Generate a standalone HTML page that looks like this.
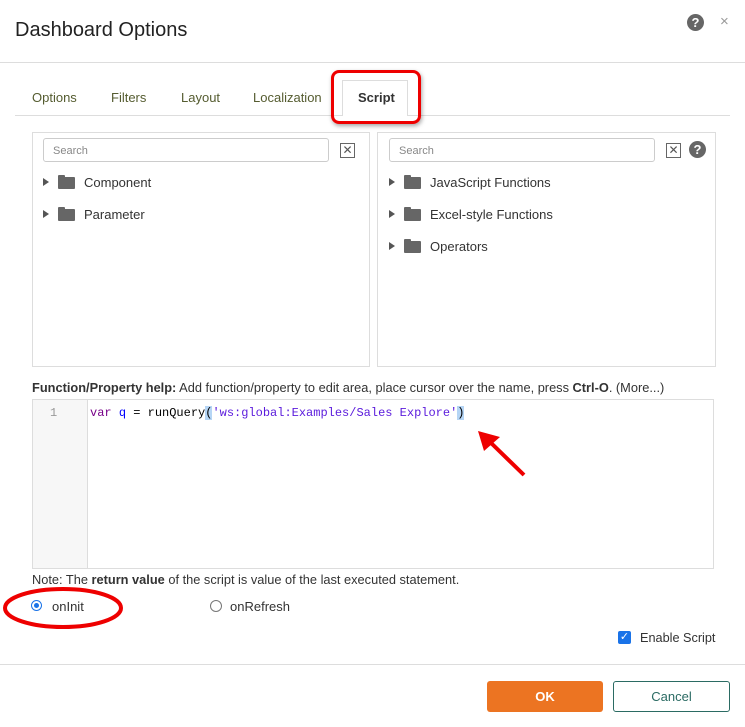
<!DOCTYPE html>
<html><head><style>
body{margin:0;width:745px;height:727px;background:#fff;font-family:"Liberation Sans",sans-serif;position:relative;overflow:hidden;color:#333}
.a{position:absolute}
.title{left:15px;top:19px;font-size:20px;color:#222}
.tab{top:90px;font-size:13px;color:#555c30}
.panel{border:1px solid #ddd;top:132px;height:233px}
.search{border:1px solid #ccc;border-radius:3px;height:24px;top:138px;font-size:11px;color:#888;box-sizing:border-box;padding:6px 9px}
.xb{width:13px;height:13px;border:1px solid #666;top:143px;font-size:12px;line-height:12px;text-align:center;color:#555}
.item{font-size:13px;color:#333}
.tri{width:0;height:0;border-left:6px solid #555;border-top:4px solid transparent;border-bottom:4px solid transparent}
.fold{width:17px;height:12px;background:#666;border-radius:1px}
.fold:before{content:"";position:absolute;left:0;top:-2px;width:7px;height:3px;background:#666;border-radius:1px 1px 0 0}
</style></head><body>
<div class="a title">Dashboard Options</div>
<div class="a" style="left:687px;top:14px;width:17px;height:17px;border-radius:50%;background:#666;color:#fff;font-weight:bold;font-size:13px;text-align:center;line-height:17px">?</div>
<div class="a" style="left:720px;top:13px;font-size:15px;color:#999">×</div>
<div class="a" style="left:0;top:62px;width:745px;height:1px;background:#ddd"></div>

<div class="a tab" style="left:32px">Options</div>
<div class="a tab" style="left:111px">Filters</div>
<div class="a tab" style="left:181px">Layout</div>
<div class="a tab" style="left:253px">Localization</div>
<div class="a" style="left:15px;top:115px;width:715px;height:1px;background:#ddd"></div>
<div class="a" style="left:342px;top:80px;width:66px;height:36px;border:1px solid #ddd;border-bottom:none;background:#fff;box-sizing:border-box"></div>
<div class="a tab" style="left:358px;color:#333;font-weight:bold">Script</div>
<div class="a" style="left:331px;top:70px;width:90px;height:54px;border:3px solid #e00;border-radius:8px;box-sizing:border-box;box-shadow:1px 2px 4px rgba(0,0,0,.35)"></div>

<div class="a panel" style="left:32px;width:336px"></div>
<div class="a panel" style="left:377px;width:337px"></div>
<div class="a search" style="left:43px;width:286px">Search</div>
<div class="a xb" style="left:340px">✕</div>
<div class="a search" style="left:389px;width:266px">Search</div>
<div class="a xb" style="left:666px">✕</div>
<div class="a" style="left:689px;top:141px;width:17px;height:17px;border-radius:50%;background:#666;color:#fff;font-weight:bold;font-size:13px;text-align:center;line-height:17px">?</div>

<div class="a tri" style="left:43px;top:178px"></div><div class="a fold" style="left:58px;top:177px"></div><div class="a item" style="left:84px;top:175px">Component</div>
<div class="a tri" style="left:43px;top:210px"></div><div class="a fold" style="left:58px;top:209px"></div><div class="a item" style="left:84px;top:207px">Parameter</div>
<div class="a tri" style="left:389px;top:178px"></div><div class="a fold" style="left:404px;top:177px"></div><div class="a item" style="left:430px;top:175px">JavaScript Functions</div>
<div class="a tri" style="left:389px;top:210px"></div><div class="a fold" style="left:404px;top:209px"></div><div class="a item" style="left:430px;top:207px">Excel-style Functions</div>
<div class="a tri" style="left:389px;top:242px"></div><div class="a fold" style="left:404px;top:241px"></div><div class="a item" style="left:430px;top:239px">Operators</div>

<div class="a" style="left:32px;top:380px;font-size:12.8px;color:#333;white-space:nowrap"><b>Function/Property help:</b> Add function/property to edit area, place cursor over the name, press <b>Ctrl-O</b>. (More...)</div>
<div class="a" style="left:32px;top:399px;width:682px;height:170px;border:1px solid #ddd;box-sizing:border-box"></div>
<div class="a" style="left:33px;top:400px;width:54px;height:168px;background:#f7f7f7;border-right:1px solid #ddd"></div>
<div class="a" style="left:50px;top:406px;font-family:'Liberation Mono',monospace;font-size:12px;color:#999">1</div>
<div class="a" style="left:90px;top:406px;font-family:'Liberation Mono',monospace;font-size:12px;white-space:pre;color:#000"><span style="color:#708">var</span> <span style="color:#00f">q</span> = runQuery<span style="background:#b5d5f5">(</span><span style="color:#5a1adc">'ws:global:Examples/Sales Explore'</span><span style="background:#b5d5f5">)</span></div>
<svg class="a" style="left:470px;top:425px" width="65" height="60"><line x1="54" y1="50" x2="18" y2="15" stroke="#e00" stroke-width="4"/><polygon points="8,6 30,12 14,26" fill="#e00"/></svg>

<div class="a" style="left:32px;top:572px;font-size:12.8px;color:#333;white-space:nowrap">Note: The <b>return value</b> of the script is value of the last executed statement.</div>
<div class="a" style="left:31px;top:600px;width:11px;height:11px;border-radius:50%;border:1px solid #1a73e8;box-sizing:border-box;background:#fff"><div style="margin:2px;width:5px;height:5px;border-radius:50%;background:#1a73e8"></div></div>
<div class="a" style="left:52px;top:599px;font-size:13px">onInit</div>
<div class="a" style="left:210px;top:600px;width:12px;height:12px;border-radius:50%;border:1px solid #777;box-sizing:border-box"></div>
<div class="a" style="left:230px;top:599px;font-size:13px">onRefresh</div>
<svg class="a" style="left:0;top:582px" width="130" height="52"><ellipse cx="63" cy="26" rx="58" ry="19" fill="none" stroke="#e00" stroke-width="4"/></svg>
<div class="a" style="left:618px;top:631px;width:13px;height:13px;border-radius:2px;background:#1a73e8;color:#fff;font-size:11px;line-height:13px;text-align:center">✓</div>
<div class="a" style="left:640px;top:631px;font-size:12.7px">Enable Script</div>
<div class="a" style="left:0;top:664px;width:745px;height:1px;background:#ddd"></div>
<div class="a" style="left:487px;top:681px;width:116px;height:31px;background:#ec7422;border-radius:3px;color:#fff;font-weight:bold;font-size:13px;text-align:center;line-height:31px">OK</div>
<div class="a" style="left:613px;top:681px;width:117px;height:31px;border:1px solid #2b6b63;border-radius:3px;box-sizing:border-box;color:#2b6b63;font-size:13px;text-align:center;line-height:29px">Cancel</div>
</body></html>
